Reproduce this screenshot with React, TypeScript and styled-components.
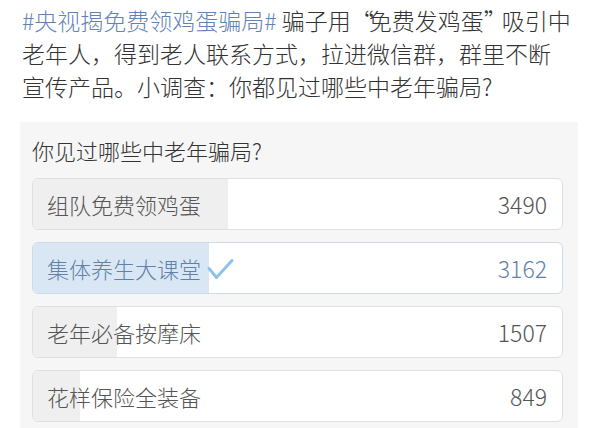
import styled, { createGlobalStyle } from "styled-components";

const GlobalStyle = createGlobalStyle`
  html, body {
    margin: 0;
    padding: 0;
    background: #ffffff;
  }
  body {
    font-family: "Noto Sans CJK SC", "Noto Sans", sans-serif;
    font-weight: 300;
    color: #333333;
  }
`;

const options = [
  { label: "组队免费领鸡蛋", count: 3490, voted: false },
  { label: "集体养生大课堂", count: 3162, voted: true },
  { label: "老年必备按摩床", count: 1507, voted: false },
  { label: "花样保险全装备", count: 849, voted: false },
];

const total = options.reduce((sum, o) => sum + o.count, 0);

const App = () => {
  return (
    <Page>
      <GlobalStyle />
      <PostText>
        <Topic>#央视揭免费领鸡蛋骗局#</Topic> 骗子用<Quote>“</Quote>免费发鸡蛋<Quote>”</Quote>吸引中
        <br />
        老年人，得到老人联系方式，拉进微信群，群里不断
        <br />
        宣传产品。小调查：你都见过哪些中老年骗局?
      </PostText>
      <Poll>
        <PollTitle>你见过哪些中老年骗局?</PollTitle>
        <OptionList>
          {options.map((o) => (
            <Option key={o.label} $voted={o.voted}>
              <Fill
                $voted={o.voted}
                style={{ width: `${(o.count / total) * 95}%` }}
              />
              <Label $voted={o.voted}>
                {o.label}
                {o.voted && (
                  <Check width="27" height="22" viewBox="0 0 27 22">
                    <path
                      d="M2 9.5 L9.5 18.5 L25 1.5"
                      fill="none"
                      stroke="#8fc1ea"
                      strokeWidth="3"
                      strokeLinecap="round"
                      strokeLinejoin="round"
                    />
                  </Check>
                )}
              </Label>
              <Count $voted={o.voted}>{o.count}</Count>
            </Option>
          ))}
        </OptionList>
      </Poll>
    </Page>
  );
};

const Page = styled.div`
  width: 600px;
  height: 428px;
  overflow: hidden;
`;

const PostText = styled.p`
  margin: 0;
  padding: 4px 0 0 22px;
  font-size: 23px;
  line-height: 33px;
  white-space: nowrap;
  color: #333333;
`;

const Topic = styled.span`
  color: #5f83b8;
`;

const Quote = styled.span`
  letter-spacing: -5px;
`;

const Poll = styled.div`
  margin: 19px 22px 0 20px;
  padding: 14px 15px 20px 12px;
  background: #f6f6f6;
`;

const PollTitle = styled.div`
  font-size: 22px;
  line-height: 28px;
  color: #333333;
`;

const OptionList = styled.div`
  display: flex;
  flex-direction: column;
  gap: 12px;
  margin-top: 14px;
`;

const Option = styled.div<{ $voted: boolean }>`
  position: relative;
  height: 52px;
  box-sizing: border-box;
  display: flex;
  align-items: center;
  justify-content: space-between;
  padding: 0 15px 0 14px;
  background: #ffffff;
  border: 1px solid ${(p) => (p.$voted ? "#c9dcee" : "#e0e0e0")};
  border-radius: 6px;
  overflow: hidden;
`;

const Fill = styled.div<{ $voted: boolean }>`
  position: absolute;
  left: 0;
  top: 0;
  bottom: 0;
  background: ${(p) => (p.$voted ? "#d9e7f5" : "#efefef")};
`;

const Label = styled.span<{ $voted: boolean }>`
  position: relative;
  display: flex;
  align-items: center;
  font-size: 22px;
  line-height: 28px;
  color: ${(p) => (p.$voted ? "#5f82ab" : "#555555")};
`;

const Check = styled.svg`
  margin-left: 6px;
  margin-top: 4px;
`;

const Count = styled.span<{ $voted: boolean }>`
  position: relative;
  font-size: 23px;
  color: ${(p) => (p.$voted ? "#5f82ab" : "#555555")};
`;

export default App;
